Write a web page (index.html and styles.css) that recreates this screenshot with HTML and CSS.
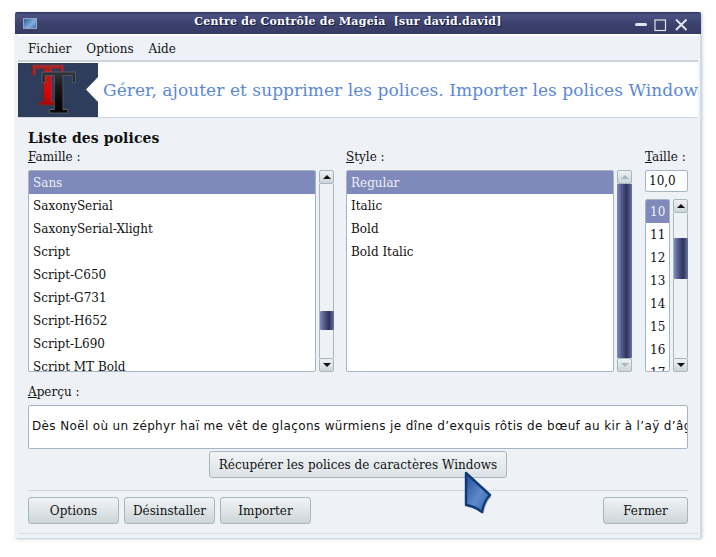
FILE: index.html
```html
<!DOCTYPE html>
<html lang="fr">
<head>
<meta charset="utf-8">
<title>Centre de Contrôle de Mageia</title>
<link rel="stylesheet" href="styles.css">
</head>
<body>
<div class="window">
  <header class="titlebar">
    <span class="app-icon"></span>
    <span class="title">Centre de Contrôle de Mageia  [sur david.david]</span>
    <svg class="win-buttons" width="56" height="14" viewBox="0 0 56 14">
      <rect x="0" y="5" width="12" height="3" rx="1.5" fill="#e2e4ec"/>
      <rect x="20" y="2" width="10.5" height="10.5" fill="none" stroke="#e2e4ec" stroke-width="1.2"/>
      <path d="M41 1.5 L51.5 12 M51.5 1.5 L41 12" stroke="#e2e4ec" stroke-width="2" fill="none"/>
    </svg>
  </header>
  <div class="inner">
    <nav class="menubar"><span>Fichier</span><span>Options</span><span>Aide</span></nav>
    <div class="banner">
      <svg class="logo" width="80" height="54" viewBox="0 0 80 54">
        <defs>
          <linearGradient id="red" x1="0" y1="0" x2="0" y2="1">
            <stop offset="0" stop-color="#9a7a80"/><stop offset=".2" stop-color="#a82020"/><stop offset=".6" stop-color="#d80808"/><stop offset="1" stop-color="#700808"/>
          </linearGradient>
          <linearGradient id="blk" x1="0" y1="0" x2="0" y2="1">
            <stop offset="0" stop-color="#4a4e55"/><stop offset=".4" stop-color="#1a1a1c"/><stop offset=".75" stop-color="#000"/><stop offset="1" stop-color="#777"/>
          </linearGradient>
        </defs>
        <rect width="80" height="54" fill="#2f3d5c"/>
        <text transform="translate(13.5 42) scale(.8 1)" class="logo-t" font-size="53.5" fill="url(#red)" stroke="#7a3038" stroke-width=".6">T</text>
        <text transform="translate(23.5 50) scale(.82 1)" class="logo-t" font-size="56" fill="url(#blk)" stroke="#70757e" stroke-width=".6">T</text>
        <path d="M80 14 L68 26.5 L80 39 Z" fill="#fff"/>
      </svg>
      <div class="banner-text">Gérer, ajouter et supprimer les polices. Importer les polices Windows</div>
    </div>
    <main class="content">
      <h1 class="heading">Liste des polices</h1>
      <div class="pickers">
        <section>
          <label class="label"><u>F</u>amille :</label>
          <div class="list-row">
            <ul class="list grow">
              <li class="sel">Sans</li><li>SaxonySerial</li><li>SaxonySerial-Xlight</li><li>Script</li><li>Script-C650</li><li>Script-G731</li><li>Script-H652</li><li>Script-L690</li><li>Script MT Bold</li>
            </ul>
            <div class="scroll">
              <span class="sbtn up"></span>
              <div class="track"><span class="thumb thumb-family"></span></div>
              <span class="sbtn down"></span>
            </div>
          </div>
        </section>
        <section>
          <label class="label"><u>S</u>tyle :</label>
          <div class="list-row style-row">
            <ul class="list grow">
              <li class="sel">Regular</li><li>Italic</li><li>Bold</li><li>Bold Italic</li>
            </ul>
            <div class="scroll">
              <span class="sbtn up off"></span>
              <div class="track"><span class="thumb thumb-full"></span></div>
              <span class="sbtn down off"></span>
            </div>
          </div>
        </section>
        <section class="size-col">
          <label class="label"><u>T</u>aille :</label>
          <div class="size-input">10,0</div>
          <div class="list-row size-row">
            <ul class="list grow">
              <li class="sel">10</li><li>11</li><li>12</li><li>13</li><li>14</li><li>15</li><li>16</li><li>17</li>
            </ul>
            <div class="scroll">
              <span class="sbtn up"></span>
              <div class="track"><span class="thumb thumb-size"></span></div>
              <span class="sbtn down"></span>
            </div>
          </div>
        </section>
      </div>
      <label class="label preview-label"><u>A</u>perçu :</label>
      <div class="preview"><span>Dès Noël où un zéphyr haï me vêt de glaçons würmiens je dîne d’exquis rôtis de bœuf au kir à l’aÿ d’âge mûr &amp; cætera</span></div>
      <div class="center"><button class="btn btn-wide">Récupérer les polices de caractères Windows</button></div>
      <hr class="sep">
      <div class="actions">
        <button class="btn btn-action">Options</button>
        <button class="btn btn-action">Désinstaller</button>
        <button class="btn btn-action">Importer</button>
        <button class="btn btn-close">Fermer</button>
      </div>
    </main>
  </div>
  <svg class="cursor" width="34" height="46" viewBox="0 0 34 46">
    <defs>
      <linearGradient id="cur" x1="0" y1="0" x2="1" y2="1">
        <stop offset="0" stop-color="#1f4f94"/><stop offset=".55" stop-color="#5d8ac8"/><stop offset="1" stop-color="#2b5fa6"/>
      </linearGradient>
    </defs>
    <path d="M3 2 L27 24 Q21 30 19 41 Q11 35 3 34 Z" fill="#000" opacity=".25" transform="translate(1.5 2)"/>
    <path d="M3 2 L27 24 Q21 30 19 41 Q11 35 3 34 Z" fill="url(#cur)" stroke="#0f3a78" stroke-width="2.4" stroke-linejoin="round"/>
  </svg>
</div>
</body>
</html>
```
FILE: styles.css
```css
* { box-sizing: border-box; }
html, body { margin: 0; background: #fff; }
body { padding: 12px 15px; height: 557px; overflow: hidden; font: 12px/16px "DejaVu Serif", serif; color: #111; }
.window { position: relative; width: 686px; height: 526px; display: flex; flex-direction: column; background: #eef1f6; border-right: 1px solid #d5dce4; box-shadow: 1px 1px 3px rgba(120,135,150,.5); }
.titlebar { position: relative; flex: none; height: 22px; margin-right: -1px; display: flex; align-items: center; justify-content: center; background: linear-gradient(#2e3356 0, #4b5183 12%, #3a406b 60%, #363c64 100%); border-radius: 2px 2px 0 0; }
.app-icon { position: absolute; left: 8px; top: 6px; width: 14px; height: 11px; background: linear-gradient(135deg, #2d5f9e, #7fb0e0 60%, #3a6ea8); border: 1px solid #9aa3b5; }
.title { font: bold 11px/16px "DejaVu Serif", serif; color: #fff; white-space: pre; letter-spacing: .22px; text-shadow: 1px 1px 0 #15183a; margin: -2px 20px 0 0; }
.win-buttons { position: absolute; left: 620px; top: 6px; }
.inner { flex: 1; display: flex; flex-direction: column; margin: 0 2px 4px 3px; border-top: 2px solid #fff; border-bottom: 1px solid #d8dfe6; }
.menubar { flex: none; height: 24px; display: flex; align-items: center; gap: 15px; padding: 1px 0 0 10px; }
.banner { flex: none; height: 58px; display: flex; background: #fff; border-top: 2px solid #cdd5da; border-bottom: 1px solid #d0d6dc; overflow: hidden; }
.logo { flex: none; display: block; margin-top: 1px; }
.logo-t { font-family: "DejaVu Serif", serif; font-weight: bold; }
.banner-text { padding: 17px 0 0 5px; font: 17px/22px "DejaVu Serif", serif; letter-spacing: .065px; color: #5b88d6; white-space: nowrap; }
.content { flex: 1; padding: 0 10px; }
.heading { margin: 12px 0 3px; font: bold 14px/16px "DejaVu Serif", serif; letter-spacing: .1px; }
.label { display: block; height: 16px; margin-bottom: 5px; }
.pickers { display: grid; grid-template-columns: 318px 299px 43px; }
.list-row { display: flex; gap: 3px; height: 202px; width: 306px; }
.style-row { width: 286px; }
.size-row { width: 43px; height: 173px; }
.grow { flex: 1; min-width: 0; }
.list { margin: 0; padding: 0; list-style: none; background: #fff; border: 1px solid #a5b5c3; border-radius: 2px; overflow: hidden; }
.list li { height: 23px; padding: 0 4px; line-height: 25px; white-space: nowrap; overflow: hidden; }
.list .sel { background: #7f8abb; color: #eef0fa; }
.scroll { flex: none; width: 15px; display: flex; flex-direction: column; }
.sbtn { flex: none; position: relative; height: 14px; background: linear-gradient(#eef1f4, #cdd5d9); border: 1px solid #a8b6bd; border-radius: 2px; }
.sbtn::after { content: ""; position: absolute; left: 3px; border-left: 4px solid transparent; border-right: 4px solid transparent; }
.up::after { top: 4px; border-bottom: 4px solid #111; }
.down::after { top: 4px; border-top: 4px solid #111; }
.off.up::after { border-bottom-color: #a9b5bb; }
.off.down::after { border-top-color: #a9b5bb; }
.track { flex: 1; display: flex; flex-direction: column; background: #eef1f6; border-left: 1px solid #a8b6bd; border-right: 1px solid #a8b6bd; }
.thumb { display: block; background: linear-gradient(90deg, #7f8abb 0, #4d5587 35%, #2e3458 65%, #6a74a5 100%); border-radius: 1px; margin: 0 -1px 0 0; }
.thumb-family { margin-top: 127px; height: 19px; }
.thumb-full { flex: 1; margin-left: -1px; }
.thumb-size { margin-top: 25px; height: 41px; }
.size-input { height: 22px; margin-bottom: 7px; padding-left: 3px; line-height: 21px; font-size: 12px; background: #fff; border: 1px solid #a5b5c3; border-radius: 2px; }
.preview-label { margin: 12px 0 5px; }
.preview { height: 44px; padding: 0 3px; background: #fff; border: 1px solid #a5b5c3; border-radius: 2px; overflow: hidden; white-space: nowrap; font: 12px/41px "DejaVu Sans", sans-serif; letter-spacing: .36px; }
.center { display: flex; justify-content: center; margin-top: 2px; }
.btn { height: 27px; padding: 0; font: 12px/16px "DejaVu Serif", serif; color: #111; background: linear-gradient(#f0f3f6, #cdd5d9); border: 1px solid #a8b6bd; border-radius: 3px; }
.btn-wide { width: 298px; background: linear-gradient(#f1f4f7, #dbe2e5); letter-spacing: .04px; }
.sep { height: 1px; margin: 12px 0 6px; border: 0; background: #cdd5da; }
.actions { display: flex; gap: 5px; }
.btn-action { width: 91px; }
.btn-close { width: 85px; margin-left: auto; }
.cursor { position: absolute; left: 448px; top: 459px; pointer-events: none; }
```
